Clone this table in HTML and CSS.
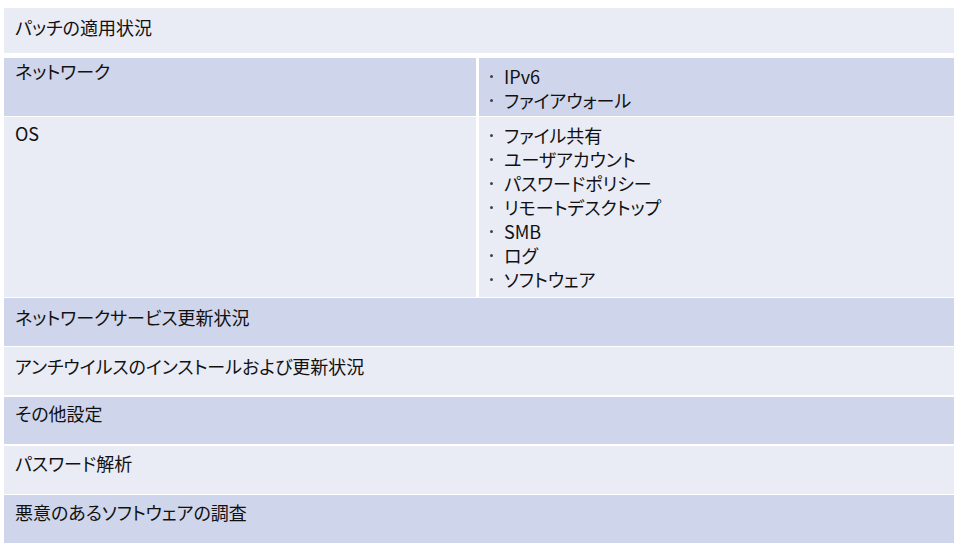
FILE: index.html
```html
<!DOCTYPE html>
<html lang="ja">
<head>
<meta charset="utf-8">
<link rel="stylesheet" href="styles.css">
</head>
<body>
<div class="table">
  <div class="row light r1"><div class="cell full">パッチの適用状況</div></div>
  <div class="row dark r2">
    <div class="cell left">ネットワーク</div>
    <div class="cell right">
      <ul class="list">
        <li>IPv6</li>
        <li>ファイアウォール</li>
      </ul>
    </div>
  </div>
  <div class="row light r3">
    <div class="cell left">OS</div>
    <div class="cell right">
      <ul class="list">
        <li>ファイル共有</li>
        <li>ユーザアカウント</li>
        <li>パスワードポリシー</li>
        <li>リモートデスクトップ</li>
        <li>SMB</li>
        <li>ログ</li>
        <li>ソフトウェア</li>
      </ul>
    </div>
  </div>
  <div class="row dark r4"><div class="cell full">ネットワークサービス更新状況</div></div>
  <div class="row light r5"><div class="cell full">アンチウイルスのインストールおよび更新状況</div></div>
  <div class="row dark r6"><div class="cell full">その他設定</div></div>
  <div class="row light r7"><div class="cell full">パスワード解析</div></div>
  <div class="row dark r8"><div class="cell full">悪意のあるソフトウェアの調査</div></div>
</div>
</body>
</html>
```

FILE: styles.css
```css
html, body {
  margin: 0;
  padding: 0;
  background: #ffffff;
}

body {
  font-family: "Noto Sans CJK JP", "Noto Sans", sans-serif;
  font-size: 18px;
  line-height: 24px;
  color: #111111;
  font-feature-settings: "palt";
}

.table {
  width: 950px;
  margin: 8px 0 0 4px;
  display: flex;
  flex-direction: column;
}

.row {
  display: flex;
  gap: 3px;
}

.light .cell { background: #e9ebf5; }
.dark .cell { background: #cfd5ea; }

.cell {
  box-sizing: border-box;
  padding-left: 11px;
}

.full { flex: 1; }
.left { width: 472px; flex: none; }
.right { flex: 1; padding-left: 10px; }

.r1 { height: 45px; }
.r1 .cell { padding-top: 7px; }

.r2 { height: 58px; margin-top: 5px; }
.r2 .left { padding-top: 1px; }
.r2 .right { padding-top: 6px; }

.r3 { height: 180px; margin-top: 1px; }
.r3 .left { padding-top: 4px; }
.r3 .right { padding-top: 6px; }

.r4 { height: 48px; margin-top: 1px; }
.r4 .cell { padding-top: 7px; }

.r5 { height: 48px; margin-top: 1px; }
.r5 .cell { padding-top: 7px; }

.r6 { height: 47px; margin-top: 2px; }
.r6 .cell { padding-top: 4px; }

.r7 { height: 48px; margin-top: 2px; }
.r7 .cell { padding-top: 5px; }

.r8 { height: 48px; margin-top: 1px; }
.r8 .cell { padding-top: 5px; }

.list {
  list-style: none;
  margin: 0;
  padding: 0;
}

.list li {
  display: flex;
  align-items: center;
  height: 24px;
}

.list li::before {
  content: "";
  width: 3px;
  height: 3px;
  border-radius: 50%;
  background: #444444;
  margin-left: 1px;
  margin-right: 11px;
  flex: none;
}
```
